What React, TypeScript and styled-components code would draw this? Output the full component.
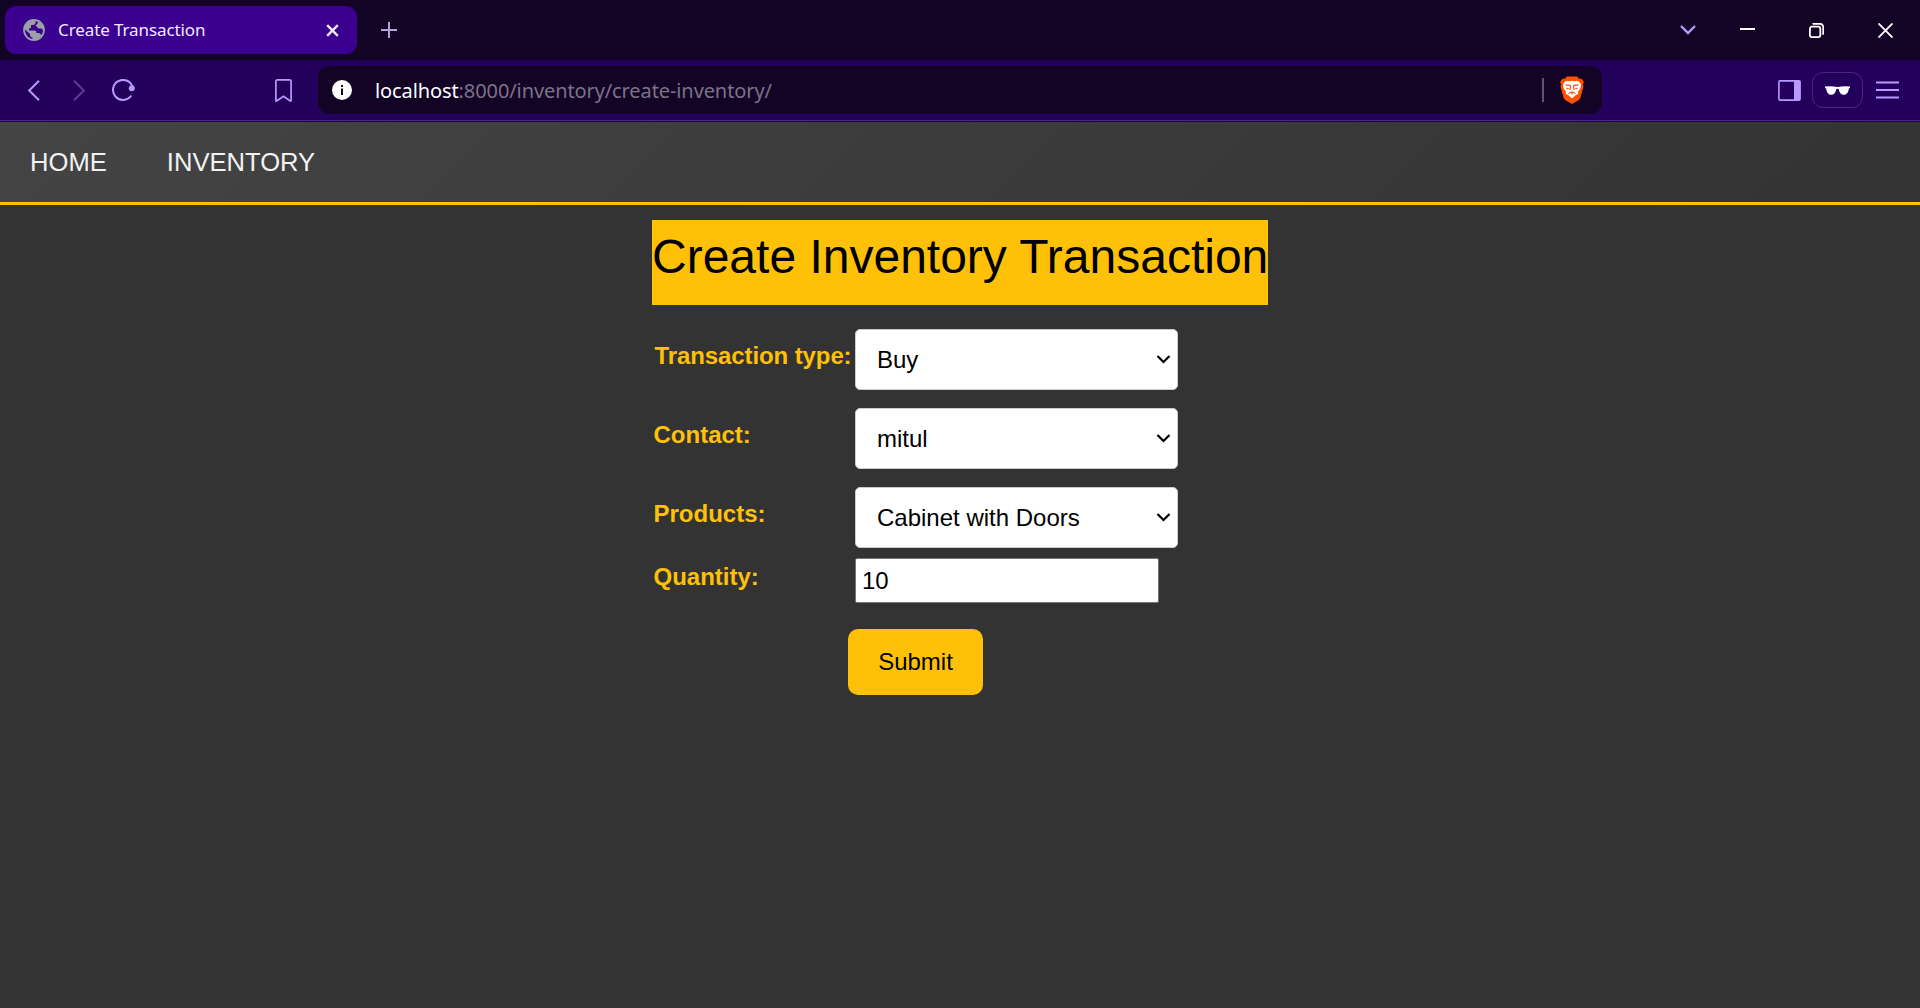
import React from "react";
import styled, { createGlobalStyle } from "styled-components";

const ui = `"Noto Sans", "Open Sans", sans-serif`;
const arial = `Arial, "Liberation Sans", sans-serif`;

const GlobalStyle = createGlobalStyle`
  *, *::before, *::after { box-sizing: border-box; }
  body { margin: 0; background: #333333; overflow: hidden; }
`;

const Window = styled.div`
  display: flex;
  flex-direction: column;
  height: 1008px;
  background: #333333;
`;

const TabStrip = styled.header`
  display: flex;
  align-items: center;
  height: 60px;
  padding-left: 5px;
  background: #130426;
`;

const Tab = styled.div`
  display: flex;
  align-items: center;
  width: 352px;
  height: 48px;
  padding: 0 18px 0 18px;
  border-radius: 11px;
  background: #3b008f;
`;

const TabTitle = styled.span`
  flex: 1;
  margin-left: 13px;
  color: #f1e9ff;
  font: 17px/24px ${ui};
  letter-spacing: -0.1px;
  white-space: nowrap;
`;

const Glyph = styled.svg`
  display: block;
  flex: none;
  fill: none;
  stroke: currentColor;
`;

const IconButton = styled.button<{ $w: number; $color?: string; $push?: number }>`
  display: flex;
  align-items: center;
  justify-content: center;
  flex: none;
  width: ${(p) => p.$w}px;
  height: 48px;
  margin-left: ${(p) => p.$push ?? 0}px;
  padding: 0;
  border: 0;
  background: none;
  color: ${(p) => p.$color ?? "#b69aff"};
`;

const WindowControls = styled.div`
  display: flex;
  margin-left: auto;
`;

const Toolbar = styled.div`
  display: flex;
  align-items: center;
  height: 62px;
  padding-bottom: 2px;
  background: linear-gradient(#22005c 60px, #4a2585 60px, #4a2585 61px, #1e0546 61px);
`;

const NavButtons = styled.div`
  display: flex;
  padding-left: 11px;
`;

const AddressBar = styled.div`
  display: flex;
  align-items: center;
  width: 1284px;
  height: 48px;
  margin-left: 10px;
  padding: 0 18px 0 14px;
  border-radius: 12px;
  background: #130426;
`;

const Url = styled.span`
  flex: 1;
  margin-left: 23px;
  padding-top: 1px;
  color: #7b7386;
  font: 20px/28px ${ui};
  letter-spacing: -0.1px;
  white-space: nowrap;
`;

const Host = styled.span`
  color: #ffffff;
`;

const Divider = styled.span`
  width: 2px;
  height: 24px;
  margin-right: 16px;
  background: #5f566e;
`;

const ToolbarEnd = styled.div`
  display: flex;
  align-items: center;
  margin-left: auto;
  padding-right: 9px;
`;

const PrivateBadge = styled.div`
  display: flex;
  align-items: center;
  justify-content: center;
  width: 51px;
  height: 36px;
  border: 1px solid #4a2585;
  border-radius: 11px;
`;

const SiteNav = styled.nav`
  display: flex;
  gap: 60px;
  height: 83px;
  padding: 0 30px;
  border-bottom: 3px solid #ffc107;
  background: linear-gradient(135deg, #444444, #333333);
`;

const SiteLink = styled.a`
  color: #f2f2f2;
  font: 25.6px/80px ${arial};
`;

const Main = styled.main`
  display: flex;
  flex-direction: column;
  width: 616px;
  margin: 15px auto 0;
`;

const Title = styled.h1`
  height: 85px;
  margin: 0 0 24px;
  background: #ffc107;
  color: #000000;
  font: 400 48px/74px ${arial};
  white-space: nowrap;
`;

const Form = styled.form`
  display: flex;
  flex-direction: column;
`;

const Field = styled.div<{ $gap: number }>`
  display: grid;
  grid-template-columns: 203px 323px;
  margin-bottom: ${(p) => p.$gap}px;
`;

const Label = styled.label<{ $indent: number; $top: number; $tracking?: number }>`
  padding-left: ${(p) => p.$indent}px;
  padding-top: ${(p) => p.$top}px;
  color: #ffc107;
  font: 700 24px/28px ${arial};
  letter-spacing: ${(p) => p.$tracking ?? 0}px;
  white-space: nowrap;
`;

const SelectBox = styled.div`
  display: flex;
  align-items: center;
  justify-content: space-between;
  height: 61px;
  padding: 1px 6px 0 21px;
  border: 1px solid #cccccc;
  border-radius: 5px;
  background: #ffffff;
  color: #000000;
  font: 24px/30px ${arial};

  svg {
    margin-bottom: 2px;
  }
`;

const QuantityInput = styled.input`
  width: 304px;
  height: 45px;
  padding: 1px 6px 0;
  border: 1px solid #767676;
  border-radius: 2px;
  background: #ffffff;
  color: #000000;
  font: 24px ${arial};
`;

const Submit = styled.button`
  width: 135px;
  height: 66px;
  margin-left: 196px;
  padding: 0;
  border: 0;
  border-radius: 10px;
  background: #ffc107;
  color: #000000;
  font: 24px ${arial};
`;

const selects = [
  { label: "Transaction type:", value: "Buy", indent: 2.5, gap: 18, tracking: -0.1 },
  { label: "Contact:", value: "mitul", indent: 1.5, gap: 18, tracking: 0 },
  { label: "Products:", value: "Cabinet with Doors", indent: 1.5, gap: 10, tracking: 0 },
];

function LionIcon() {
  return (
    <Glyph width="24" height="28" viewBox="0 0 24 28">
      <path
        d="M7 .5H17L19.500 3 21.500 2.800 23.800 6 23 8.500 23.500 10.500 20.500 21.500Q20 23 18.500 24.200L12 28 5.500 24.200Q4 23 3.500 21.500L.5 10.500 1 8.500 .2 6 2.500 2.800 4.500 3Z"
        fill="#ff5000"
        stroke="none"
      />
      <path
        d="M7.500 4.800 10 5.300 12 4.700 14 5.300 16.500 4.800 19 5.500 21 8.500 20.500 12 18 16 18.300 18 16.500 18.700 15 19.700 12 22.500 9 19.700 7.500 18.700 5.700 18 6 16 3.500 12 3 8.500 5 5.500Z"
        fill="#fff"
        stroke="none"
      />
      <path
        d="M5.500 8.800 9.800 9.300 10.500 10 10 14M18.500 8.800 14.200 9.300 13.500 10 14 14M8.500 17.500 12 15.800 15.500 17.500M12 15.500V18.500"
        stroke="#ff5000"
        strokeWidth="1.200"
      />
      <path d="M6 11.500 9 12.300 8.500 13.200 6.500 12.700ZM18 11.500 15 12.300 15.500 13.200 17.500 12.700Z" fill="#ff5000" stroke="none" />
    </Glyph>
  );
}

export default function App() {
  return (
    <Window>
      <GlobalStyle />
      <TabStrip>
        <Tab>
          <Glyph width="22" height="22" viewBox="0 0 22 22">
            <circle cx="11" cy="11" r="10" strokeWidth="1.8" stroke="#9aa0a6" />
            <path
              fill="#9aa0a6"
              stroke="none"
              d="M1 11C1 5 6 1 12.500 1.200V3.500C12.500 5 11.500 6 10 6H8V8C8 9 7.200 9.500 6 9.500V11.500H11.500C13 11.500 13.500 12.500 13.500 14H15.500C17 14 18 15 18.300 17C15.500 20.800 12 21.500 9.500 20.900V18.500C8 18.500 7 17.500 7 16V15L2 10.500Z"
            />
            <path fill="#9aa0a6" stroke="none" d="M15 2.500C19 4 21.500 8 20.800 12L18.500 9.500H16C14.800 9.500 14 8.700 14 7.500L12 6.500C13.800 6 15 4.500 15 2.500Z" />
          </Glyph>
          <TabTitle>Create Transaction</TabTitle>
          <Glyph width="13" height="13" viewBox="0 0 13 13" color="#f1e9ff">
            <path d="M1.200 1.200 11.800 11.800M11.800 1.200 1.200 11.800" strokeWidth="2.400" />
          </Glyph>
        </Tab>
        <IconButton $w={64} $color="#b5a4dc">
          <Glyph width="16" height="16" viewBox="0 0 16 16">
            <path d="M8 0V16M0 8H16" strokeWidth="2" />
          </Glyph>
        </IconButton>
        <WindowControls>
          <IconButton $w={50}>
            <Glyph width="16" height="10" viewBox="0 0 16 10">
              <path d="M1 1 8 8 15 1" strokeWidth="2.400" />
            </Glyph>
          </IconButton>
          <IconButton $w={69} $color="#ffffff">
            <Glyph width="15" height="4" viewBox="0 0 15 4">
              <path d="M0 1H15" strokeWidth="2" />
            </Glyph>
          </IconButton>
          <IconButton $w={69} $color="#ffffff">
            <Glyph width="15" height="15" viewBox="0 0 15 15">
              <rect x="0.900" y="3.700" width="10.400" height="10.400" rx="2" strokeWidth="1.800" />
              <path d="M3.500 1.200Q4 .8 5.500 .8H10.500Q14.200 .8 14.200 4.500V9.500Q14.200 11 13.500 11.700" strokeWidth="1.700" />
            </Glyph>
          </IconButton>
          <IconButton $w={69} $color="#ffffff">
            <Glyph width="15" height="15" viewBox="0 0 15 15">
              <path d="M.5 .5 14.500 14.500M14.500 .5 .5 14.500" strokeWidth="1.900" />
            </Glyph>
          </IconButton>
        </WindowControls>
      </TabStrip>

      <Toolbar>
        <NavButtons>
          <IconButton $w={45}>
            <Glyph width="12" height="21" viewBox="0 0 12 21">
              <path d="M11 .8 1.200 10.500 11 20.200" strokeWidth="2" />
            </Glyph>
          </IconButton>
          <IconButton $w={45} $color="#5b3a9c">
            <Glyph width="12" height="21" viewBox="0 0 12 21">
              <path d="M1 .8 10.800 10.500 1 20.200" strokeWidth="2" />
            </Glyph>
          </IconButton>
          <IconButton $w={45}>
            <Glyph width="23" height="22" viewBox="0 0 23 22">
              <path d="M20 6.600A10 10 0 1 0 18.800 17.200" strokeWidth="2" strokeLinecap="round" />
              <circle cx="19.800" cy="9.200" r="3" fill="currentColor" stroke="none" />
            </Glyph>
          </IconButton>
        </NavButtons>
        <IconButton $w={50} $push={112}>
          <Glyph width="17" height="23" viewBox="0 0 17 23">
            <path d="M2.500 .9H14.500Q16.100 .9 16.100 2.500V21.500Q16.100 22.500 15 21.800L8.500 17.300 2 21.800Q.9 22.500 .9 21.500V2.500Q.9 .9 2.500 .9Z" strokeWidth="1.700" />
          </Glyph>
        </IconButton>
        <AddressBar>
          <Glyph width="20" height="20" viewBox="0 0 20 20">
            <circle cx="10" cy="10" r="10" fill="#fff" stroke="none" />
            <path d="M10 8.500V15M10 5V7" stroke="#130426" strokeWidth="2" />
          </Glyph>
          <Url>
            <Host>localhost</Host>:8000/inventory/create-inventory/
          </Url>
          <Divider />
          <LionIcon />
        </AddressBar>
        <ToolbarEnd>
          <IconButton $w={46}>
            <Glyph width="23" height="21" viewBox="0 0 23 21">
              <rect x=".9" y=".9" width="21.200" height="19.200" rx="1" strokeWidth="1.600" />
              <path d="M16 1H22V20H16Z" fill="currentColor" stroke="none" />
            </Glyph>
          </IconButton>
          <PrivateBadge>
            <Glyph width="25" height="9" viewBox="0 0 25 9">
              <path
                d="M0 .5Q6 -.4 12.500 1 19 -.4 25 .5V2L23.800 2.500C23.500 6.500 21.500 8.800 18.800 8.800 16 8.800 14.200 6.500 13.700 3.200Q12.500 2.200 11.300 3.200C10.800 6.500 9 8.800 6.200 8.800 3.500 8.800 1.500 6.500 1.200 2.500L0 2Z"
                fill="#fff"
                stroke="none"
              />
            </Glyph>
          </PrivateBadge>
          <IconButton $w={48}>
            <Glyph width="23" height="18" viewBox="0 0 23 18">
              <path d="M0 1.500H23M0 9H23M0 16.500H23" strokeWidth="2" />
            </Glyph>
          </IconButton>
        </ToolbarEnd>
      </Toolbar>

      <SiteNav>
        <SiteLink>HOME</SiteLink>
        <SiteLink>INVENTORY</SiteLink>
      </SiteNav>

      <Main>
        <Title>Create Inventory Transaction</Title>
        <Form>
          {selects.map((s) => (
            <Field key={s.label} $gap={s.gap}>
              <Label $indent={s.indent} $top={13} $tracking={s.tracking}>
                {s.label}
              </Label>
              <SelectBox>
                {s.value}
                <Glyph width="15" height="10" viewBox="0 0 15 10">
                  <path d="M1.500 2 7.500 8 13.500 2" strokeWidth="2.200" />
                </Glyph>
              </SelectBox>
            </Field>
          ))}
          <Field $gap={26}>
            <Label $indent={1.5} $top={5}>
              Quantity:
            </Label>
            <QuantityInput defaultValue="10" />
          </Field>
          <Submit type="button">Submit</Submit>
        </Form>
      </Main>
    </Window>
  );
}
